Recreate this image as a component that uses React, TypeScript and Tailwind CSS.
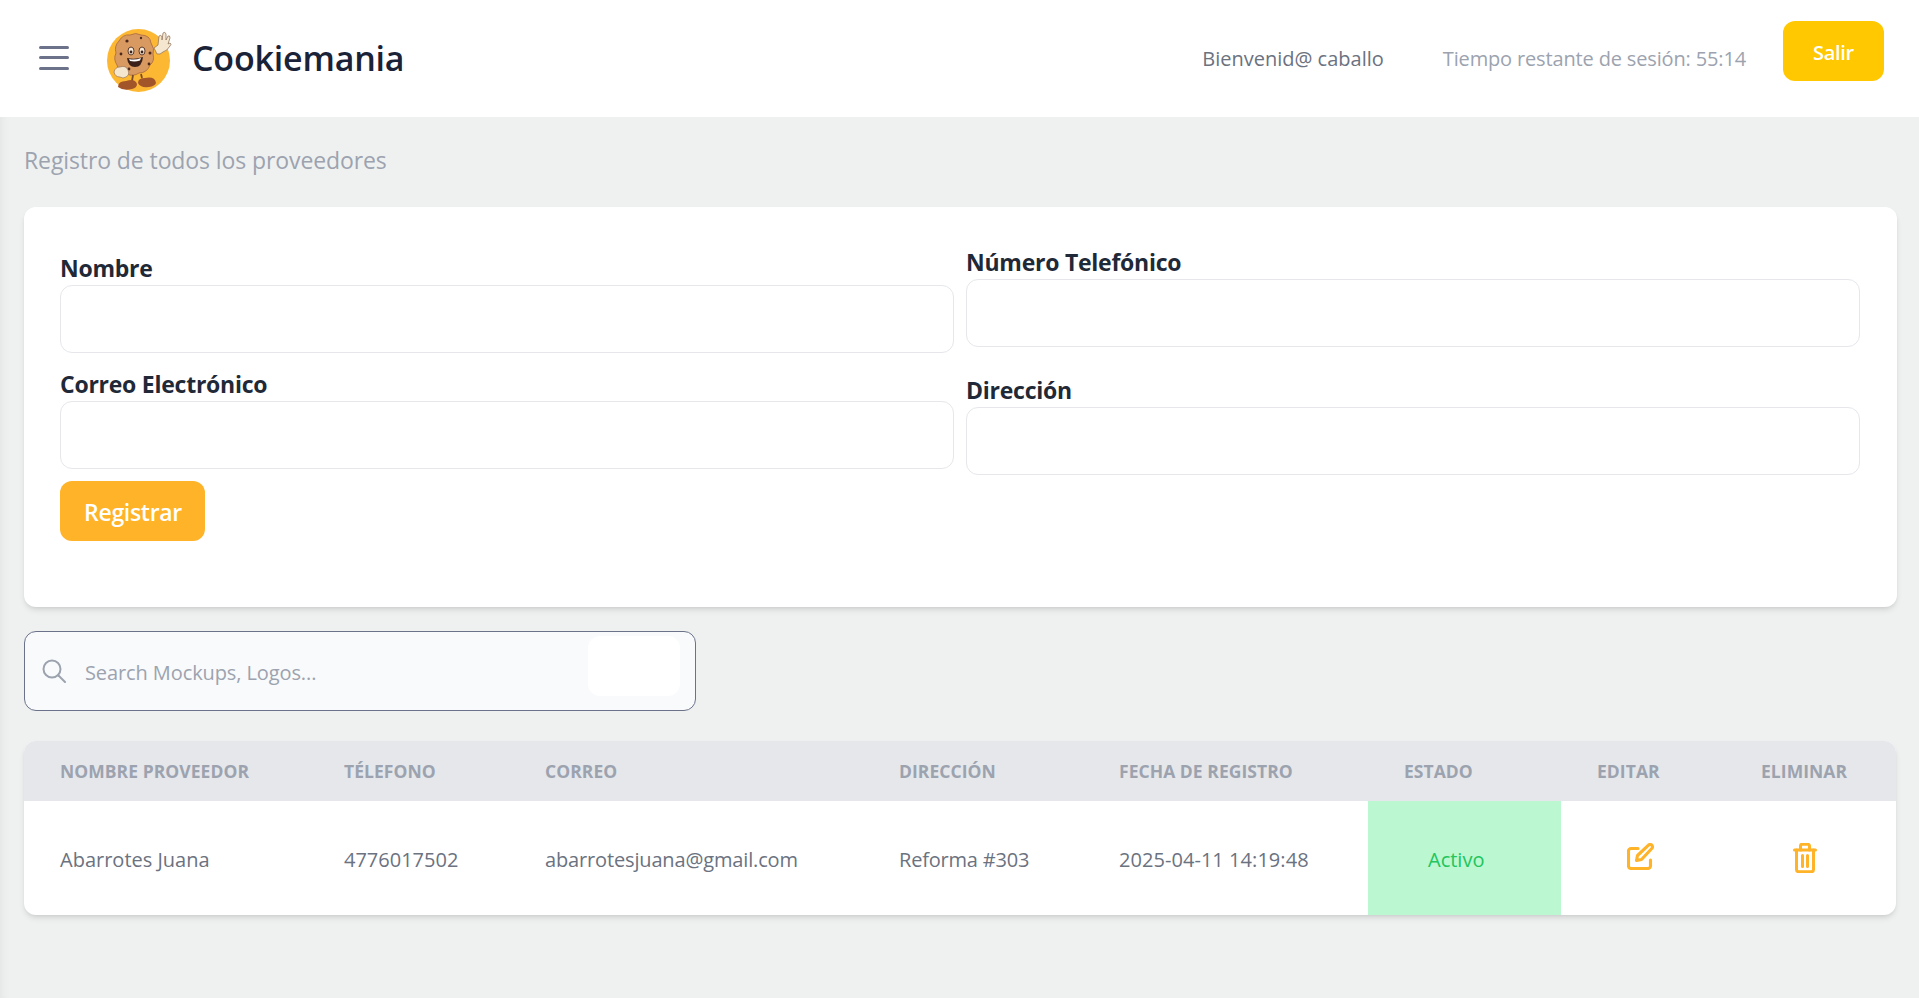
const font = "font-['Open_Sans','Noto_Sans',sans-serif]";

const columns = [
  { label: 'NOMBRE PROVEEDOR', width: 'w-[284px]' },
  { label: 'TÉLEFONO', width: 'w-[201px]' },
  { label: 'CORREO', width: 'w-[354px]' },
  { label: 'DIRECCIÓN', width: 'w-[220px]' },
  { label: 'FECHA DE REGISTRO', width: 'w-[285px]' },
  { label: 'ESTADO', width: 'w-[193px]' },
  { label: 'EDITAR', width: 'w-[164px]' },
  { label: 'ELIMINAR', width: 'w-[171px]' },
];

function Logo() {
  return (
    <svg viewBox="90 15 100 80" className="h-20 w-[100px] shrink-0">
      <circle cx="138.500" cy="56.500" r="31.500" fill="#fdb833" />
      <path d="M119 37 q4 -7 11 -6 q6 -3 11 0 q9 0 10 8 q4 6 2 11 q2 7 -3 11 q-3 8 -11 8 q-6 4 -12 1 q-8 -1 -10 -9 q-4 -6 -1 -12 q-2 -7 3 -12z" fill="#d99a62" stroke="#a8683f" strokeWidth="0.800" />
      <circle cx="127" cy="37" r="1.600" fill="#4d2a1c" />
      <circle cx="141" cy="34" r="1.200" fill="#4d2a1c" />
      <circle cx="121" cy="50" r="1.400" fill="#4d2a1c" />
      <circle cx="150" cy="49" r="1.500" fill="#4d2a1c" />
      <circle cx="149" cy="60" r="1.400" fill="#4d2a1c" />
      <circle cx="129" cy="65" r="1.400" fill="#4d2a1c" />
      <ellipse cx="131" cy="47" rx="3" ry="4" fill="#f7ead8" stroke="#4d2a1c" strokeWidth="0.900" />
      <ellipse cx="142" cy="47" rx="3" ry="4" fill="#f7ead8" stroke="#4d2a1c" strokeWidth="0.900" />
      <circle cx="131" cy="48" r="1.400" fill="#3a2018" />
      <circle cx="142" cy="48" r="1.400" fill="#3a2018" />
      <path d="M127 54 q8 2 16 -1 q-1 10 -8 10 q-7 0 -8 -9z" fill="#3a2018" />
      <path d="M129 55 q6 1.500 12 -1 l-1 2.500 q-5 1.500 -10 0.500z" fill="#fff" />
      <path d="M133 71 l-1 6 M141 70 l1 4" stroke="#7a4a2c" strokeWidth="1.800" />
      <path d="M118 83 q0 -6 8 -6 q9 -3 11 3 q0 4 -5 5 q-9 2 -14 -2z" fill="#a3552a" />
      <path d="M138 79 q0 -5 7 -5 q10 -2 11 5 q-1 3 -7 4 q-9 1 -11 -4z" fill="#a3552a" />
      <path d="M114 68 q1 -5 6 -5 q6 -2 8 3 q2 5 -2 7 q-3 2 -6 0 q-5 0 -6 -5z" fill="#f5e6cf" stroke="#8a6a50" strokeWidth="0.600" />
      <path d="M154 44 l4 -3 l1 -9 q2 -2 3 1 l0 3 l1 -7 q2 -2 3 1 l0 6 l2 -4 q2 -1 2 2 l-2 6 l2 -1 q2 1 0 3 q-3 5 -7 6 q-3 3 -6 2z" fill="#f5e6cf" stroke="#8a6a50" strokeWidth="0.700" />
    </svg>
  );
}

function EditIcon() {
  return (
    <svg viewBox="0 0 27 27" className="mt-[-4px] h-[27px] w-[27px]" fill="none" stroke="#ffb328" strokeWidth="3.100" strokeLinecap="round" strokeLinejoin="round">
      <path d="M11 5.500H4a2.500 2.500 0 0 0-2.500 2.500v15A2.500 2.500 0 0 0 4 25.500h17a2.500 2.500 0 0 0 2.500-2.500v-6" />
      <path d="M9.500 17.500l1-5L21.500 2.200a2.300 2.300 0 0 1 3.300 0a2.300 2.300 0 0 1 0 3.300L14.500 16.500z" />
    </svg>
  );
}

function TrashIcon() {
  return (
    <svg viewBox="0 0 24 30" className="h-[30px] w-6" fill="none" stroke="#ffb328" strokeWidth="3" strokeLinecap="round" strokeLinejoin="round">
      <path d="M1.500 7h21" />
      <path d="M7.500 7V3a1.800 1.800 0 0 1 1.800-1.800h5.400A1.800 1.800 0 0 1 16.500 3v4" />
      <path d="M3.500 7v19.500a2.200 2.200 0 0 0 2.200 2.200h12.600a2.200 2.200 0 0 0 2.200-2.200V7" />
      <path d="M9.500 12.500v11M14.500 12.500v11" />
    </svg>
  );
}

export default function App() {
  return (
    <div className={`${font} min-h-screen bg-[#eff1f1]`}>
      {/* Top bar */}
      <header className="flex h-[117px] items-center bg-white pl-[39px] pr-[35px]">
        <button className="mr-[21px] mt-[-2px] flex h-6 w-[30px] flex-col justify-between">
          <span className="h-[3px] w-full rounded-full bg-[#6b7289]" />
          <span className="h-[3px] w-full rounded-full bg-[#6b7289]" />
          <span className="h-[3px] w-full rounded-full bg-[#6b7289]" />
        </button>
        <Logo />
        <h1 className="ml-[2px] text-[34px] font-semibold tracking-[-0.2px] text-[#1a2238]">Cookiemania</h1>
        <span className="ml-auto text-[20px] text-[#6b7280]">Bienvenid@ caballo</span>
        <span className="ml-[59px] text-[20px] tracking-[-0.15px] text-[#9ca3af]">Tiempo restante de sesión: 55:14</span>
        <button className="ml-[37px] mb-[15px] h-[60px] w-[101px] rounded-xl bg-[#ffc800] pt-1 text-[20px] font-semibold tracking-[-0.3px] text-white">Salir</button>
      </header>

      <main className="pl-6 pr-[22px] pt-[28px] pb-[83px] shadow-[inset_10px_0_10px_-8px_rgba(0,0,0,0.05)]">
        <h2 className="text-[23px] leading-[30px] tracking-[-0.1px] text-[#9ca3af]">Registro de todos los proveedores</h2>

        {/* Form card */}
        <section className="mt-[32px] rounded-xl bg-white pl-9 pr-[37px] pb-[66px] shadow-md">
          <div className="grid grid-cols-2 gap-x-3">
            <div className="pt-[46px]">
              <label className="mt-[-1px] block h-[33px] text-[23px] font-bold leading-8 tracking-[-0.25px] text-[#1f2937]">Nombre</label>
              <input className="block h-[68px] w-full rounded-xl border border-[#e5e7eb]" />
              <label className="mt-[15px] block h-[33px] text-[23px] font-bold leading-8 tracking-[-0.25px] text-[#1f2937]">Correo Electrónico</label>
              <input className="block h-[68px] w-full rounded-xl border border-[#e5e7eb]" />
            </div>
            <div className="pt-10">
              <label className="mt-[-1px] block h-[33px] text-[23px] font-bold leading-8 tracking-[-0.25px] text-[#1f2937]">Número Telefónico</label>
              <input className="block h-[68px] w-full rounded-xl border border-[#e5e7eb]" />
              <label className="mt-[27px] block h-[33px] text-[23px] font-bold leading-8 tracking-[-0.25px] text-[#1f2937]">Dirección</label>
              <input className="block h-[68px] w-full rounded-xl border border-[#e5e7eb]" />
            </div>
          </div>
          <button className="mt-[6px] block h-[60px] w-[145px] rounded-xl bg-[#ffb328] pt-[2px] pl-px text-[23px] font-semibold tracking-[-0.3px] text-white">Registrar</button>
        </section>

        {/* Search */}
        <div className="mt-6 flex h-[80px] w-[672px] items-center rounded-xl border border-[#6b7289] bg-[#f9fafb] pl-[17px] pr-[15px]">
          <svg viewBox="0 0 24 24" className="mt-[-1px] h-6 w-6 shrink-0" fill="none" stroke="#9ca3af" strokeWidth="2" strokeLinecap="round">
            <circle cx="10" cy="10" r="8.500" />
            <path d="M16.500 16.500L23 23" />
          </svg>
          <input placeholder="Search Mockups, Logos..." className="ml-[19px] mt-[3px] min-w-0 flex-1 bg-transparent text-[20px] tracking-[-0.1px] outline-none placeholder:text-[#9ca3af]" />
          <div className="mb-[10px] h-[60px] w-[92px] rounded-xl bg-white" />
        </div>

        {/* Table */}
        <div className="mr-px mt-[30px] overflow-hidden rounded-xl bg-white shadow-md">
          <table className="w-full table-fixed border-collapse text-left">
            <thead className="bg-[#e5e7eb]">
              <tr className="h-[60px]">
                {columns.map((col) => (
                  <th key={col.label} className={`${col.width} whitespace-nowrap pl-9 text-[17.500px] font-bold tracking-[0.05px] text-[#9ca3af]`}>
                    {col.label}
                  </th>
                ))}
              </tr>
            </thead>
            <tbody>
              <tr className="h-[114px] text-[20px] text-[#6b7280]">
                <td className="pl-9 pt-[3px]">Abarrotes Juana</td>
                <td className="pl-9 pt-[3px]">4776017502</td>
                <td className="pl-9 pt-[3px] tracking-[-0.15px]">abarrotesjuana@gmail.com</td>
                <td className="pl-9 pt-[3px] tracking-[-0.2px]">Reforma #303</td>
                <td className="pl-9 pt-[3px] tracking-[0.05px]">2025-04-11 14:19:48</td>
                <td className="bg-[#bbf7d0] pl-[60px] pt-[3px] text-[#22c55e]">Activo</td>
                <td className="pl-[66px]"><EditIcon /></td>
                <td className="pl-[68px]"><TrashIcon /></td>
              </tr>
            </tbody>
          </table>
        </div>
      </main>
    </div>
  );
}
